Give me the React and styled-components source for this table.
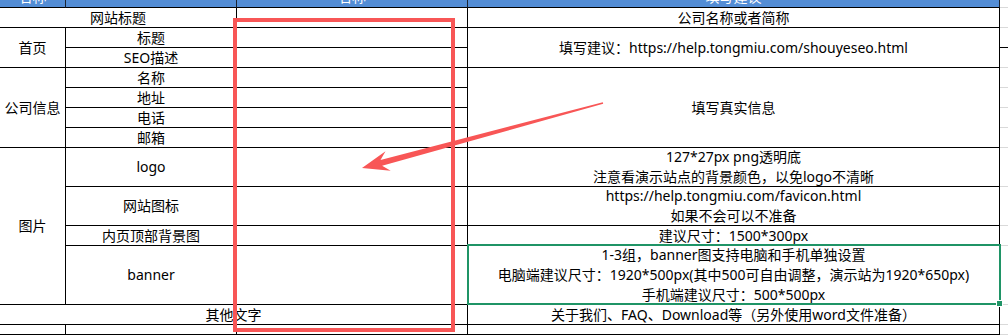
import styled, { createGlobalStyle, css } from "styled-components";

const GlobalStyle = createGlobalStyle`
  html, body {
    margin: 0;
    background: #fff;
  }
`

const Page = styled.div`
  position: relative;
  width: 1008px;
  height: 335px;
  overflow: hidden;
  font-family: "Noto Sans", "Noto Sans CJK SC", sans-serif;
  font-size: 14px;
  color: #000;
`

const Sheet = styled.div`
  display: grid;
  grid-template-columns: 66px 171px 231px 532px 1fr;
  grid-template-rows: 8px repeat(7, 20px) 39px 39px 20px 59px 20px 1fr;
  height: 100%;
`

const Cell = styled.div`
  box-sizing: border-box;
  grid-column: span ${p => p.$span || 1};
  grid-row: span ${p => p.$rows || 1};
  display: flex;
  flex-direction: column;
  align-items: center;
  justify-content: center;
  border-right: 1px solid #000;
  border-bottom: 1px solid #000;
  line-height: 20px;
  white-space: nowrap;
  text-align: center;
  position: relative;
`

const HeadCell = styled(Cell)`
  background: #538dd5;
  color: #fff;
  justify-content: flex-end;
  overflow: hidden;
  border-right-color: #1a2330;
`

const Spare = styled.div`
  box-sizing: border-box;
  border-bottom: 1px solid ${p => (p.$dark ? "#000" : "#d9d9d9")};
`

const Selected = styled(Cell)`
  &::after {
    content: "";
    position: absolute;
    top: -2px;
    left: -1px;
    right: -2px;
    bottom: -1px;
    border: 2px solid #1f9466;
    pointer-events: none;
  }
  &::before {
    content: "";
    position: absolute;
    right: -4px;
    bottom: -3px;
    width: 5px;
    height: 5px;
    background: #1f9466;
    border: 1px solid #fff;
    z-index: 1;
  }
`

const Overlay = styled.svg`
  position: absolute;
  top: 0;
  left: 0;
  pointer-events: none;
`

const Markup = () => (
  <Overlay width="1008" height="335" viewBox="0 0 1008 335">
    <rect x="235" y="20" width="218" height="310" fill="none" stroke="#f85656" strokeWidth="4" />
    <polygon
      fill="#f85656"
      points="602.8,102.2 380.5,159.9 385.5,151.3 362,168 390.7,170.7 382.1,165.7 603.2,103.8"
    />
  </Overlay>
)

const Lines = ({ children }) => children.map((t, i) => <span key={i}>{t}</span>)

export default function App() {
  return (
    <Page>
      <GlobalStyle />
      <Sheet>
        <HeadCell>名称</HeadCell>
        <HeadCell />
        <HeadCell>名称</HeadCell>
        <HeadCell>填写建议</HeadCell>
        <Spare />

        <Cell $span={2}>网站标题</Cell>
        <Cell />
        <Cell>公司名称或者简称</Cell>
        <Spare />

        <Cell $rows={2}>首页</Cell>
        <Cell>标题</Cell>
        <Cell />
        <Cell $rows={2}>填写建议：https://help.tongmiu.com/shouyeseo.html</Cell>
        <Spare $dark />
        <Cell>SEO描述</Cell>
        <Cell />
        <Spare />

        <Cell $rows={4}>公司信息</Cell>
        <Cell>名称</Cell>
        <Cell />
        <Cell $rows={4}>填写真实信息</Cell>
        <Spare />
        <Cell>地址</Cell>
        <Cell />
        <Spare />
        <Cell>电话</Cell>
        <Cell />
        <Spare />
        <Cell>邮箱</Cell>
        <Cell />
        <Spare />

        <Cell $rows={4}>图片</Cell>
        <Cell>logo</Cell>
        <Cell />
        <Cell>
          <Lines>{["127*27px png透明底", "注意看演示站点的背景颜色，以免logo不清晰"]}</Lines>
        </Cell>
        <Spare />
        <Cell>网站图标</Cell>
        <Cell />
        <Cell>
          <Lines>{["https://help.tongmiu.com/favicon.html", "如果不会可以不准备"]}</Lines>
        </Cell>
        <Spare />
        <Cell>内页顶部背景图</Cell>
        <Cell />
        <Cell>建议尺寸：1500*300px</Cell>
        <Spare />
        <Cell>banner</Cell>
        <Cell />
        <Selected>
          <Lines>
            {[
              "1-3组，banner图支持电脑和手机单独设置",
              "电脑端建议尺寸：1920*500px(其中500可自由调整，演示站为1920*650px)",
              "手机端建议尺寸：500*500px",
            ]}
          </Lines>
        </Selected>
        <Spare />

        <Cell $span={3}>其他文字</Cell>
        <Cell>关于我们、FAQ、Download等（另外使用word文件准备）</Cell>
        <Spare />

        <Cell />
        <Cell />
        <Cell />
        <Cell />
        <Spare />
      </Sheet>
      <Markup />
    </Page>
  )
}
